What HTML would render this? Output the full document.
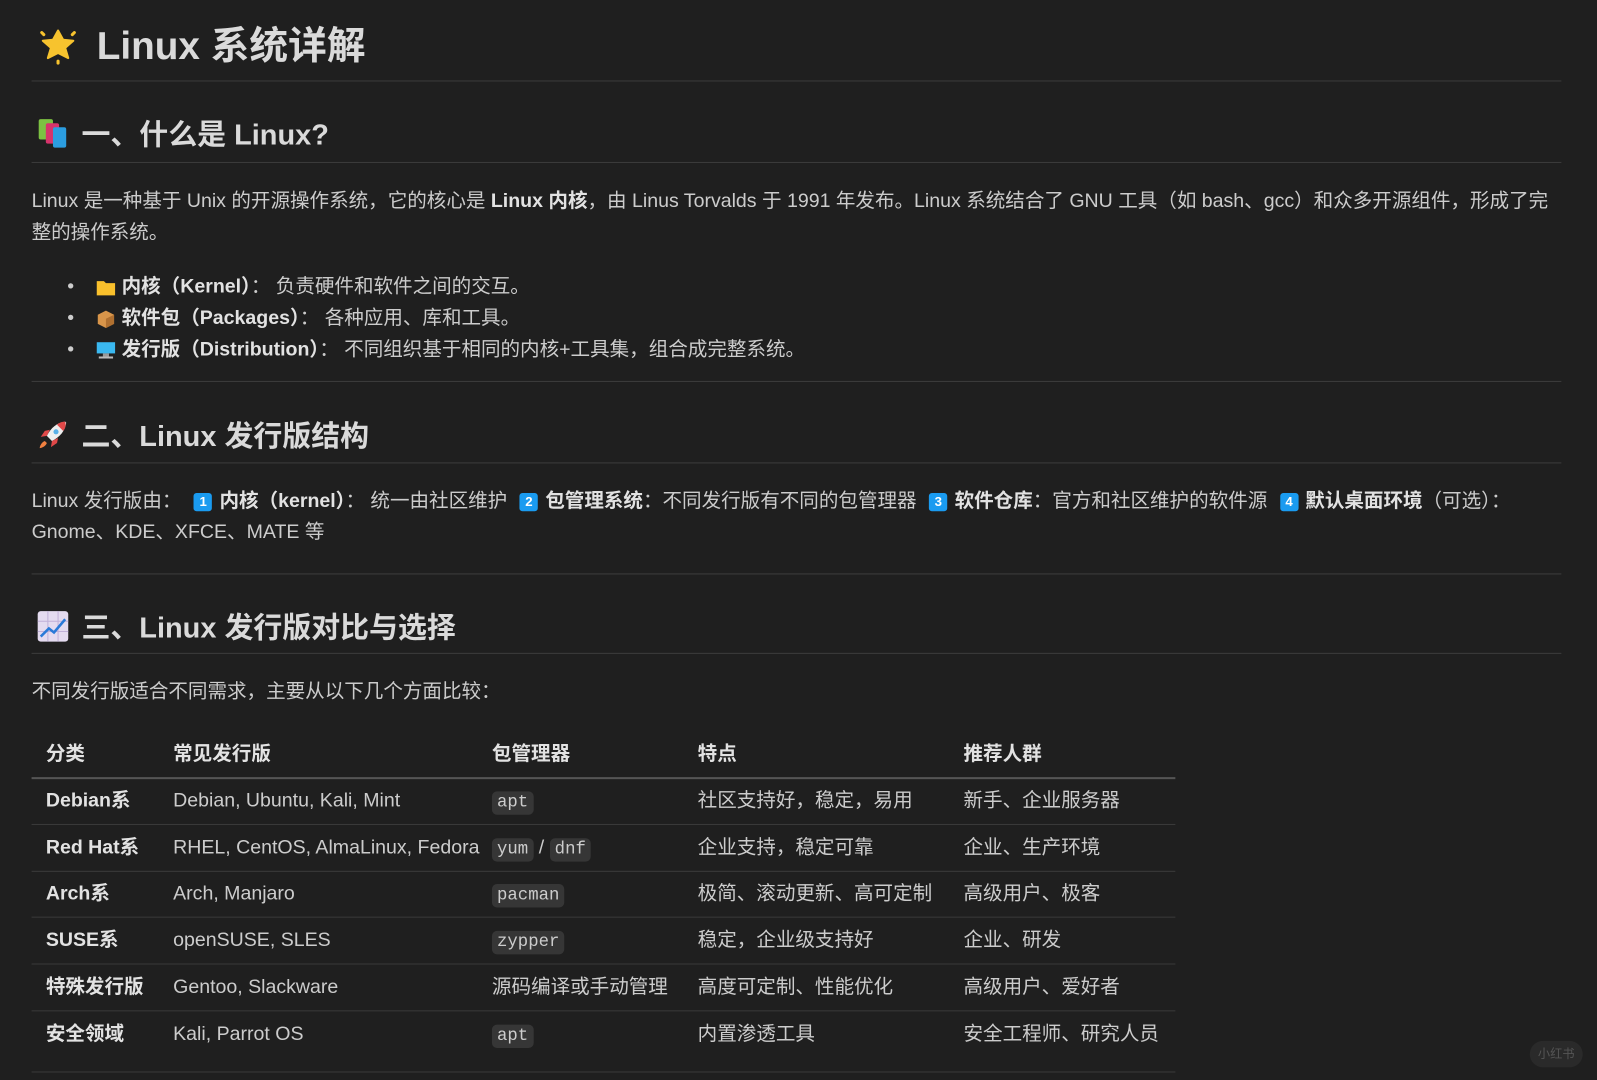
<!DOCTYPE html>
<html><head><meta charset="utf-8"><style>
body{margin:0;width:1597px;height:1080px;background:#1f1f1f;color:#cccccc;font-family:"Liberation Sans","Noto Sans CJK SC",sans-serif;overflow:hidden;position:relative}
#w{position:absolute;left:0;top:0;width:1568px;height:1060px;transform:scale(1.0185);transform-origin:0 0}
.a{position:absolute;white-space:nowrap}
.hr{position:absolute;left:31px;width:1502px;height:1px;background:#3c3c3c}
.t{font-size:19.2px;line-height:24px}
b{color:#e2e2e2}
.ic{display:inline-block;vertical-align:middle}
.code{font-family:"Liberation Mono",monospace;background:#363636;border-radius:5px;padding:2px 5px;font-size:17px}
.num{display:inline-block;width:18px;height:18px;background:#1a9bf0;border-radius:3px;color:#fff;font-size:13px;font-weight:bold;text-align:center;line-height:18px;vertical-align:middle;margin:0 7px}
.row{position:absolute;left:31px;width:1123px;height:1px;background:#3a3a3a}
</style></head><body><div id="w">
<div class="a" style="left:37px;top:24px;font-size:38px;font-weight:bold;color:#dadada;line-height:44px">
<svg class="ic" width="40" height="40" viewBox="0 0 40 40" style="margin-right:18px;vertical-align:-6px"><polygon points="20,6 25,15 35,16 27,23 30,33 20,28 10,33 13,23 5,16 15,15" fill="#f7c32e" stroke="#f7c32e" stroke-width="2" stroke-linejoin="round"/><g stroke="#f7c32e" stroke-width="3" stroke-linecap="round"><line x1="4" y1="8" x2="6" y2="10"/><line x1="36" y1="8" x2="34" y2="10"/><line x1="20" y1="36" x2="20" y2="38"/></g></svg>Linux 系统详解</div>
<div class="hr" style="top:79px"></div>
<div class="a" style="left:36px;top:115px;font-size:28.4px;font-weight:bold;color:#dadada;line-height:34px">
<svg class="ic" width="32" height="32" viewBox="0 0 32 32" style="margin-right:12px;vertical-align:-5px"><rect x="2" y="2" width="14" height="20" rx="2" fill="#7cc142"/><rect x="9" y="6" width="13" height="20" rx="2" fill="#d7336b"/><rect x="16" y="10" width="13" height="20" rx="2" fill="#2b9de0"/></svg>一、什么是 Linux?</div>
<div class="hr" style="top:159px"></div>
<div class="a t" style="left:31px;top:186px">Linux 是一种基于 Unix 的开源操作系统，它的核心是 <b>Linux 内核</b>，由 Linus Torvalds 于 1991 年发布。Linux 系统结合了 GNU 工具（如 bash、gcc）和众多开源组件，形成了完</div>
<div class="a t" style="left:31px;top:217px">整的操作系统。</div>
<div class="a t" style="left:66px;top:270px">•&nbsp;&nbsp;&nbsp;&nbsp;<svg class="ic" width="20" height="18" viewBox="0 0 20 18"><path d="M1 3h7l2 2h9v12H1z" fill="#f9c02c"/></svg> <b>内核（Kernel）</b>： 负责硬件和软件之间的交互。</div>
<div class="a t" style="left:66px;top:301px">•&nbsp;&nbsp;&nbsp;&nbsp;<svg class="ic" width="20" height="18" viewBox="0 0 20 18"><path d="M10 1l8 4v9l-8 4-8-4V5z" fill="#d8954a"/><path d="M10 9l8-4v9l-8 4z" fill="#b07030"/></svg> <b>软件包（Packages）</b>： 各种应用、库和工具。</div>
<div class="a t" style="left:66px;top:332px">•&nbsp;&nbsp;&nbsp;&nbsp;<svg class="ic" width="20" height="18" viewBox="0 0 20 18"><rect x="1" y="1" width="18" height="11" fill="#3ab8f0"/><rect x="7" y="12" width="6" height="3" fill="#999"/><rect x="3" y="15" width="14" height="2" fill="#bbb"/></svg> <b>发行版（Distribution）</b>： 不同组织基于相同的内核+工具集，组合成完整系统。</div>
<div class="hr" style="top:374px"></div>
<div class="a" style="left:36px;top:411px;font-size:28.4px;font-weight:bold;color:#dadada;line-height:34px">
<svg class="ic" width="32" height="32" viewBox="0 0 32 32" style="margin-right:12px;vertical-align:-5px"><path d="M28 3c-8 1-14 6-18 14l5 5c8-4 13-10 14-18z" fill="#eee"/><path d="M28 3c-3 0-6 1-8 3l6 6c2-2 3-5 2-9z" fill="#e04848"/><circle cx="19" cy="13" r="2.5" fill="#5ab0e8"/><path d="M10 17l-6 1 4-6 5-1zM15 22l-1 6 6-4 1-5z" fill="#e04848"/><path d="M8 22c-3 1-5 5-5 7 2 0 6-2 7-5z" fill="#f08040"/></svg>二、Linux 发行版结构</div>
<div class="hr" style="top:454px"></div>
<div class="a t" style="left:31px;top:481px">Linux 发行版由： <span class="num">1</span><b>内核（kernel）</b>： 统一由社区维护 <span class="num">2</span><b>包管理系统</b>：不同发行版有不同的包管理器 <span class="num">3</span><b>软件仓库</b>：官方和社区维护的软件源 <span class="num">4</span><b>默认桌面环境</b>（可选）：</div>
<div class="a t" style="left:31px;top:511px">Gnome、KDE、XFCE、MATE 等</div>
<div class="hr" style="top:563px"></div>
<div class="a" style="left:36px;top:599px;font-size:28.4px;font-weight:bold;color:#dadada;line-height:34px">
<svg class="ic" width="32" height="32" viewBox="0 0 32 32" style="margin-right:12px;vertical-align:-5px"><rect x="1" y="1" width="30" height="30" rx="3" fill="#e4dbf0"/><g stroke="#c0b0d8" stroke-width="1"><line x1="11" y1="1" x2="11" y2="31"/><line x1="21" y1="1" x2="21" y2="31"/><line x1="1" y1="11" x2="31" y2="11"/><line x1="1" y1="21" x2="31" y2="21"/></g><path d="M4 26l8-8 5 4 11-13" stroke="#2a7ad8" stroke-width="2.5" fill="none"/></svg>三、Linux 发行版对比与选择</div>
<div class="hr" style="top:641px"></div>
<div class="a t" style="left:31px;top:668px">不同发行版适合不同需求，主要从以下几个方面比较：</div>
<div class="a t" style="left:45px;top:729px"><b>分类</b></div>
<div class="a t" style="left:170px;top:729px"><b>常见发行版</b></div>
<div class="a t" style="left:483px;top:729px"><b>包管理器</b></div>
<div class="a t" style="left:685px;top:729px"><b>特点</b></div>
<div class="a t" style="left:946px;top:729px"><b>推荐人群</b></div>
<div class="row" style="top:763px;height:2px;background:#555"></div>
<div class="a t" style="left:45px;top:775px"><b>Debian系</b></div><div class="a t" style="left:170px;top:775px">Debian, Ubuntu, Kali, Mint</div><div class="a t" style="left:483px;top:775px"><span class="code">apt</span></div><div class="a t" style="left:685px;top:775px">社区支持好，稳定，易用</div><div class="a t" style="left:946px;top:775px">新手、企业服务器</div>
<div class="row" style="top:809px"></div>
<div class="a t" style="left:45px;top:821px"><b>Red Hat系</b></div><div class="a t" style="left:170px;top:821px">RHEL, CentOS, AlmaLinux, Fedora</div><div class="a t" style="left:483px;top:821px"><span class="code">yum</span> / <span class="code">dnf</span></div><div class="a t" style="left:685px;top:821px">企业支持，稳定可靠</div><div class="a t" style="left:946px;top:821px">企业、生产环境</div>
<div class="row" style="top:855px"></div>
<div class="a t" style="left:45px;top:866px"><b>Arch系</b></div><div class="a t" style="left:170px;top:866px">Arch, Manjaro</div><div class="a t" style="left:483px;top:866px"><span class="code">pacman</span></div><div class="a t" style="left:685px;top:866px">极简、滚动更新、高可定制</div><div class="a t" style="left:946px;top:866px">高级用户、极客</div>
<div class="row" style="top:900px"></div>
<div class="a t" style="left:45px;top:912px"><b>SUSE系</b></div><div class="a t" style="left:170px;top:912px">openSUSE, SLES</div><div class="a t" style="left:483px;top:912px"><span class="code">zypper</span></div><div class="a t" style="left:685px;top:912px">稳定，企业级支持好</div><div class="a t" style="left:946px;top:912px">企业、研发</div>
<div class="row" style="top:946px"></div>
<div class="a t" style="left:45px;top:958px"><b>特殊发行版</b></div><div class="a t" style="left:170px;top:958px">Gentoo, Slackware</div><div class="a t" style="left:483px;top:958px">源码编译或手动管理</div><div class="a t" style="left:685px;top:958px">高度可定制、性能优化</div><div class="a t" style="left:946px;top:958px">高级用户、爱好者</div>
<div class="row" style="top:992px"></div>
<div class="a t" style="left:45px;top:1004px"><b>安全领域</b></div><div class="a t" style="left:170px;top:1004px">Kali, Parrot OS</div><div class="a t" style="left:483px;top:1004px"><span class="code">apt</span></div><div class="a t" style="left:685px;top:1004px">内置渗透工具</div><div class="a t" style="left:946px;top:1004px">安全工程师、研究人员</div>
<div class="row" style="top:1052px"></div>
<div class="a" style="left:1502px;top:1022px;width:52px;height:26px;border-radius:13px;background:#2a2a2a;color:#555;font-size:12px;line-height:26px;text-align:center">小红书</div>
</div></body></html>
